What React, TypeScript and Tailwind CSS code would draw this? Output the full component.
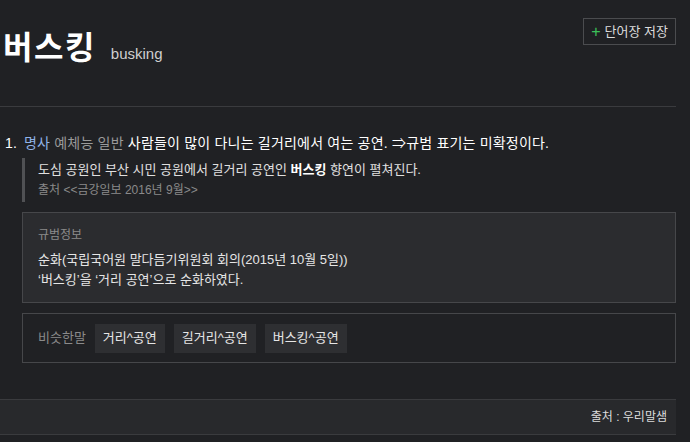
import React from 'react';

const synonyms = ['거리^공연', '길거리^공연', '버스킹^공연'];

const App: React.FC = () => {
    return (
        <div
            className='w-[690px] h-[442px] bg-[#202124] text-[#e8e8e8] overflow-hidden pr-[14px]'
            style={{ fontFamily: '"Liberation Sans", "Noto Sans CJK KR", sans-serif' }}
        >
            <div className='w-full'>
                {/* header */}
                <div className='flex justify-between items-start h-[107px] pl-[3px] border-b border-[#3a3b3e]'>
                    <div className='flex items-baseline mt-[28px]'>
                        <h1 className='text-[32px] leading-[40px] font-bold text-white tracking-[1.5px]'>버스킹</h1>
                        <span className='ml-[15px] text-[15px] text-[#cfcfcf]'>busking</span>
                    </div>
                    <button className='mt-[18px] h-[27px] px-[7px] flex items-center border border-[#4b4c4f] text-[13px] text-[#dcdcdc]'>
                        <span className='text-[#3cc15a] text-[16px] leading-none mr-[4px]'>+</span>
                        단어장 저장
                    </button>
                </div>

                {/* definition */}
                <div className='pt-[25px] pl-[5px]'>
                    <p className='text-[14px] leading-[22px] tracking-[0.2px]'>
                        <span className='inline-block w-[19px] text-white'>1.</span>
                        <span className='text-[#8fb3e8]'>명사</span>{' '}
                        <span className='text-[#9a9a9a]'>예체능 일반</span>{' '}
                        <span className='text-white'>사람들이 많이 다니는 길거리에서 여는 공연. ⇒규범 표기는 미확정이다.</span>
                    </p>
                    <div className='ml-[17px] mt-[4px] border-l-[3px] border-[#505154] pl-[13px] py-[2px]'>
                        <p className='text-[13px] leading-[20px] text-[#e0e0e0]'>
                            도심 공원인 부산 시민 공원에서 길거리 공연인 <b className='text-white'>버스킹</b> 향연이 펼쳐진다.
                        </p>
                        <p className='text-[12px] leading-[20px] text-[#8a8a8a]'>출처 &lt;&lt;금강일보 2016년 9월&gt;&gt;</p>
                    </div>

                    <div className='ml-[17px] mt-[10px] bg-[#2b2c2f] border border-[#46474a] px-[15px] pt-[13px] pb-[12px]'>
                        <p className='text-[12px] leading-[18px] text-[#8a8a8a]'>규범정보</p>
                        <p className='mt-[6px] text-[13px] leading-[20px] text-[#e6e6e6]'>순화(국립국어원 말다듬기위원회 회의(2015년 10월 5일))</p>
                        <p className='text-[13px] leading-[20px] text-[#e6e6e6]'>‘버스킹’을 ‘거리 공연’으로 순화하였다.</p>
                    </div>

                    <div className='ml-[17px] mt-[10px] border border-[#46474a] h-[50px] px-[15px] flex items-center'>
                        <span className='text-[13px] text-[#8a8a8a] mr-[9px]'>비슷한말</span>
                        {synonyms.map((s, i) => (
                            <span key={i} className='mr-[9px] h-[29px] px-[8px] flex items-center bg-[#2e2f32] text-[13px] text-[#e6e6e6]'>{s}</span>
                        ))}
                    </div>
                </div>

                {/* footer */}
                <div className='mt-[36px] h-[36px] bg-[#28292c] border-y border-[#3a3b3e] flex items-center justify-end pr-[9px]'>
                    <span className='text-[12px] text-[#dcdcdc]'>출처 : 우리말샘</span>
                </div>
            </div>
        </div>
    );
};

export default App;
